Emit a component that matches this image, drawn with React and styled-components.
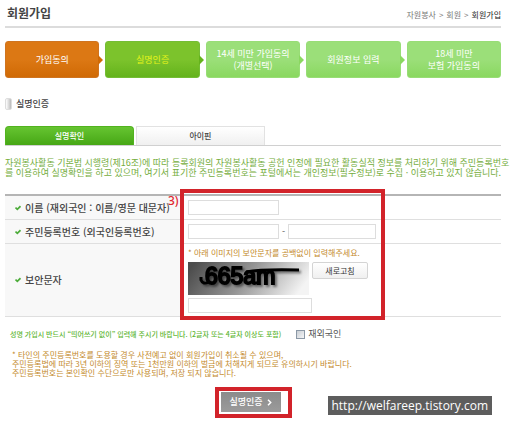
import { createGlobalStyle, styled } from "styled-components";

const GlobalStyle = createGlobalStyle`
  * {
    box-sizing: border-box;
  }

  body {
    margin: 0;
    background: #fff;
    color: #555;
    font-family: "Noto Sans CJK KR", "Noto Sans", sans-serif;
    font-size: 9px;
    line-height: 10px;
  }

  button,
  input {
    font-family: inherit;
    margin: 0;
  }
`;

const Page = styled.main`
  position: relative;
  padding: 0 10px 5px 5px;
`;

const Header = styled.header`
  display: flex;
  justify-content: space-between;
  align-items: center;
  height: 28px;
  padding-left: 2px;
  border-bottom: 2px solid #dcdcdc;
`;

const Title = styled.h1`
  margin: 0;
  font-size: 12px;
  line-height: 16px;
  font-weight: 700;
  color: #444;
`;

const Breadcrumb = styled.nav`
  display: flex;
  gap: 3px;
  padding-top: 4px;
  font-size: 8px;
  color: #777;
`;

const Crumb = styled.a`
  color: ${(props) => (props.$current ? "#222" : "#777")};
  text-decoration: none;
`;

const Steps = styled.ol`
  display: flex;
  gap: 6px;
  margin: 13px 0 0;
  padding: 0;
  list-style: none;
`;

const tones = {
  orange: { top: "#dc7814", bottom: "#d06a05", edge: "#cf7420", text: "#fff" },
  green: { top: "#7cc32c", bottom: "#64b31c", edge: "#74bd35", text: "#e4f31a" },
  light: { top: "#9bdf79", bottom: "#8ad860", edge: "#98dd76", text: "#fff" },
};

const Step = styled.li`
  position: relative;
  flex: 1;
  display: flex;
  align-items: center;
  justify-content: center;
  height: 37px;
  border: 1px solid ${(props) => tones[props.$tone].edge};
  border-radius: 3px;
  background: linear-gradient(
    ${(props) => tones[props.$tone].top} 50%,
    ${(props) => tones[props.$tone].bottom}
  );
  color: ${(props) => tones[props.$tone].text};
  font-size: 9px;
  line-height: 12px;
  text-align: center;
  white-space: pre-line;

  &:not(:last-child)::after {
    content: "";
    position: absolute;
    top: 13px;
    left: 100%;
    border: 5px solid transparent;
    border-right-width: 0;
    border-left-color: ${(props) => tones[props.$tone].bottom};
  }
`;

const SectionTitle = styled.h2`
  display: flex;
  align-items: center;
  gap: 4px;
  margin: 19px 0 16px;
  font-size: 9px;
  line-height: 13px;
  font-weight: 500;
  color: #444;

  &::before {
    content: "";
    width: 5px;
    height: 10px;
    border: 1px solid #ddd;
    border-radius: 2px;
    background: linear-gradient(90deg, #fff, #bbb);
  }
`;

const Tabs = styled.div`
  display: flex;
  gap: 2px;
  border-bottom: 1px solid #d0d0d0;
`;

const Tab = styled.button`
  width: 26%;
  height: 19px;
  padding: 0;
  border: 1px solid ${(props) => (props.$active ? "#52b31f" : "#e2e2e2")};
  border-bottom: 0;
  border-radius: ${(props) => (props.$active ? "4px 4px 0 0" : "0")};
  background: ${(props) =>
    props.$active
      ? "linear-gradient(#66c431, #46a715)"
      : "linear-gradient(#fff, #f0f0f0)"};
  color: ${(props) => (props.$active ? "#fff" : "#444")};
  font-size: 8px;
  line-height: 10px;
  font-weight: 500;
`;

const Intro = styled.p`
  margin: 12px 0 16px;
  color: #74ad3c;
  font-size: 9px;
  line-height: 10px;
  white-space: nowrap;
`;

const FormArea = styled.div`
  position: relative;
`;

const Table = styled.table`
  width: 100%;
  border-spacing: 0;
  border-top: 2px solid #b5b5b5;
`;

const Row = styled.tr`
  height: ${(props) => (props.$tall ? "73px" : "24px")};

  > * {
    border-bottom: 1px solid #dfdfdf;
  }
`;

const HeadCell = styled.th`
  width: 176px;
  padding: 0 0 0 10px;
  background: #f8f8f8;
  text-align: left;
  font-weight: 500;
  color: #444;
`;

const FieldLabel = styled.label`
  display: flex;
  align-items: center;
  gap: 4px;
  font-size: 10px;
  line-height: 12px;
  white-space: nowrap;
`;

const Cell = styled.td`
  padding: 0 0 0 7px;
`;

const Fields = styled.div`
  display: flex;
  align-items: center;
  gap: 3px;
`;

const TextInput = styled.input`
  display: block;
  width: ${(props) => props.$width || "91px"};
  height: 15px;
  padding: 0 3px;
  border: 1px solid #ddd;
  background: #fff;
  font-size: 9px;
`;

const Captcha = styled.div`
  display: flex;
  flex-direction: column;
  gap: 3px;
`;

const CaptchaRow = styled.div`
  display: flex;
  align-items: flex-start;
  gap: 3px;
`;

const Hint = styled.p`
  margin: 0;
  color: #c48a2c;
  font-size: 8px;
  line-height: 12px;
`;

const RefreshButton = styled.button`
  width: 56px;
  height: 17px;
  padding: 0;
  border: 1px solid #d4d4d4;
  border-radius: 2px;
  background: linear-gradient(#fff, #f0f0f0);
  color: #333;
  font-size: 8px;
  line-height: 10px;
`;

const CaptchaLetters = styled.g`
  font-family: "Liberation Sans", sans-serif;
  font-size: 23px;
  filter: drop-shadow(2px 2px 1px rgba(0, 0, 0, 0.45));
`;

const Highlight = styled.div`
  position: absolute;
  top: -5px;
  left: 175px;
  width: 205px;
  height: 131px;
  border: 4px solid #d2232a;
  pointer-events: none;
`;

const StepNumber = styled.span`
  position: absolute;
  top: 0;
  left: 163px;
  color: #e0262d;
  font-family: "Noto Sans", sans-serif;
  font-size: 12px;
  line-height: 14px;
  font-weight: 500;
`;

const NameRule = styled.div`
  display: flex;
  align-items: center;
  gap: 15px;
  margin-top: 11px;
  padding-left: 5px;
  color: #5db531;
  font-size: 7px;
  line-height: 12px;
  font-weight: 500;
`;

const CheckLabel = styled.label`
  display: flex;
  align-items: center;
  gap: 3px;
  color: #555;
  font-size: 9px;
  font-weight: 400;
`;

const Checkbox = styled.input`
  appearance: none;
  width: 9px;
  height: 9px;
  border: 1px solid #8b98a6;
  background: linear-gradient(135deg, #c9ced4, #f4f5f6);
`;

const Notice = styled.p`
  margin: 10px 0 0;
  padding-left: 7px;
  color: #c48a2c;
  font-size: 8px;
  line-height: 9px;
`;

const SubmitFrame = styled.div`
  width: fit-content;
  margin: 10px auto 0;
  padding: 1px 7px 2px 2px;
  border: 4px solid #d2232a;
`;

const SubmitButton = styled.button`
  display: flex;
  align-items: center;
  justify-content: center;
  gap: 4px;
  width: 60px;
  height: 20px;
  padding: 0;
  border: 0;
  background: linear-gradient(#8b8b8b, #9b9b9b);
  color: #fff;
  font-size: 9px;
  line-height: 12px;
  font-weight: 500;
`;

const SiteLink = styled.a`
  position: absolute;
  right: 19px;
  bottom: 8px;
  padding: 0 4px 0 3px;
  background: #5d5d5d;
  color: #fff;
  font-family: "Open Sans", sans-serif;
  font-size: 12px;
  line-height: 19px;
  text-decoration: none;
`;

const CheckMark = () => (
  <svg width="6" height="6" viewBox="0 0 6 6">
    <path d="M0.5 2.6 L2.3 4.4 L5.5 1.2" fill="none" stroke="#4dac3a" strokeWidth="1.7" />
  </svg>
);

const Arrow = () => (
  <svg width="5" height="7" viewBox="0 0 5 7">
    <path d="M1 0.8 L3.7 3.5 L1 6.2" fill="none" stroke="#fff" strokeWidth="1.5" />
  </svg>
);

const CaptchaImage = () => (
  <svg width="121" height="33" viewBox="0 0 121 33" role="img" aria-label="보안문자">
    <defs>
      <linearGradient id="captchaBg" x1="0" y1="0.3" x2="1" y2="0.5">
        <stop offset="0" stopColor="#4d4d4d" />
        <stop offset="0.5" stopColor="#969696" />
        <stop offset="1" stopColor="#f4f4f4" />
      </linearGradient>
    </defs>
    <rect width="121" height="33" fill="url(#captchaBg)" />
    <CaptchaLetters>
      <text x="17" y="22" stroke="#000" strokeWidth="2">
        665am
      </text>
      <path d="M13 15 V18 Q15 23 21 20" fill="none" stroke="#000" strokeWidth="3" />
      <path d="M58 10 Q74 7 111 8" fill="none" stroke="#000" strokeWidth="3" />
    </CaptchaLetters>
  </svg>
);

const steps = [
  { text: "가입동의", tone: "orange" },
  { text: "실명인증", tone: "green" },
  { text: "14세 미만 가입동의\n(개별선택)", tone: "light" },
  { text: "회원정보 입력", tone: "light" },
  { text: "18세 미만\n보험 가입동의", tone: "light" },
];

const App = () => {
  return (
    <Page lang="ko">
      <GlobalStyle />
      <Header>
        <Title>회원가입</Title>
        <Breadcrumb>
          <Crumb href="#volunteer">자원봉사</Crumb>
          <span>&gt;</span>
          <Crumb href="#member">회원</Crumb>
          <span>&gt;</span>
          <Crumb href="#join" $current>
            회원가입
          </Crumb>
        </Breadcrumb>
      </Header>
      <Steps>
        {steps.map((step) => (
          <Step key={step.text} $tone={step.tone}>
            {step.text}
          </Step>
        ))}
      </Steps>
      <SectionTitle>실명인증</SectionTitle>
      <Tabs>
        <Tab type="button" $active>
          실명확인
        </Tab>
        <Tab type="button">아이핀</Tab>
      </Tabs>
      <Intro>
        자원봉사활동 기본법 시행령(제16조)에 따라 등록회원의 자원봉사활동 공헌
        인정에 필요한 활동실적 정보를 처리하기 위해 주민등록번호
        <br />를 이용하여 실명확인을 하고 있으며, 여기서 표기한 주민등록번호는
        포털에서는 개인정보(필수정보)로 수집 · 이용하고 있지 않습니다.
      </Intro>
      <FormArea>
        <Table>
          <tbody>
            <Row>
              <HeadCell scope="row">
                <FieldLabel htmlFor="name">
                  <CheckMark />
                  이름 (재외국인 : 이름/영문 대문자)
                </FieldLabel>
              </HeadCell>
              <Cell>
                <TextInput id="name" type="text" />
              </Cell>
            </Row>
            <Row>
              <HeadCell scope="row">
                <FieldLabel htmlFor="idFront">
                  <CheckMark />
                  주민등록번호 (외국인등록번호)
                </FieldLabel>
              </HeadCell>
              <Cell>
                <Fields>
                  <TextInput id="idFront" type="text" />
                  <span>-</span>
                  <TextInput type="text" $width="88px" aria-label="주민등록번호 뒷자리" />
                </Fields>
              </Cell>
            </Row>
            <Row $tall>
              <HeadCell scope="row">
                <FieldLabel htmlFor="captcha">
                  <CheckMark />
                  보안문자
                </FieldLabel>
              </HeadCell>
              <Cell>
                <Captcha>
                  <Hint>* 아래 이미지의 보안문자를 공백없이 입력해주세요.</Hint>
                  <CaptchaRow>
                    <CaptchaImage />
                    <RefreshButton type="button">새로고침</RefreshButton>
                  </CaptchaRow>
                  <TextInput id="captcha" type="text" $width="124px" />
                </Captcha>
              </Cell>
            </Row>
          </tbody>
        </Table>
        <StepNumber>3)</StepNumber>
        <Highlight />
      </FormArea>
      <NameRule>
        <span>
          성명 가입시 반드시 “띄어쓰기 없이” 입력해 주시기 바랍니다. (2글자 또는
          4글자 이상도 포함)
        </span>
        <CheckLabel>
          <Checkbox type="checkbox" />
          재외국인
        </CheckLabel>
      </NameRule>
      <Notice>
        * 타인의 주민등록번호를 도용할 경우 사전예고 없이 회원가입이 취소될 수
        있으며,
        <br />
        주민등록법에 따라 3년 이하의 징역 또는 1천만원 이하의 벌금에 처해지게
        되므로 유의하시기 바랍니다.
        <br />
        주민등록번호는 본인확인 수단으로만 사용되며, 저장 되지 않습니다.
      </Notice>
      <SubmitFrame>
        <SubmitButton type="submit">
          실명인증
          <Arrow />
        </SubmitButton>
      </SubmitFrame>
      <SiteLink href="http://welfareep.tistory.com">
        http://welfareep.tistory.com
      </SiteLink>
    </Page>
  );
};

export default App;
